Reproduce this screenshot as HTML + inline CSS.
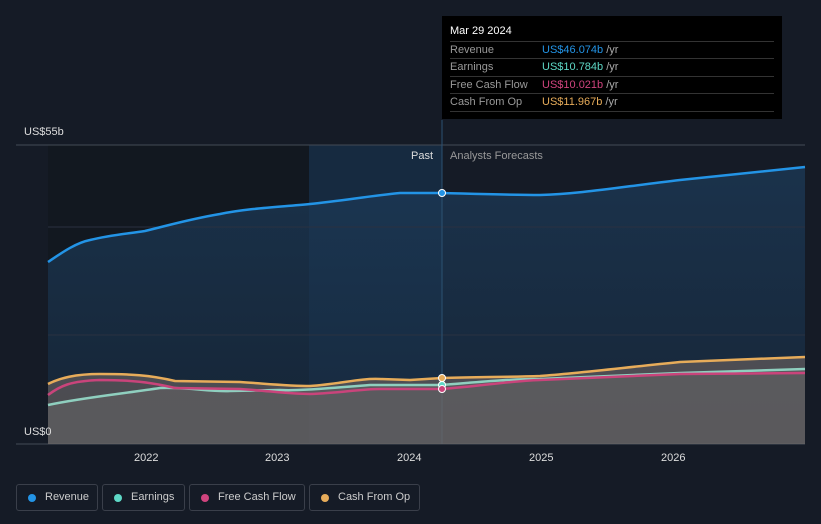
<!DOCTYPE html><html><head><style>
body{margin:0;width:821px;height:524px;background:#151b26;font-family:"Liberation Sans",sans-serif;overflow:hidden;position:relative}
.t{position:absolute;color:#ddd;font-size:11px}
.tip{position:absolute;left:442px;top:16px;width:340px;height:103px;background:#000;}
.tip .h{position:absolute;left:8px;top:9px;color:#fff;font-size:11px}
.row{position:absolute;left:8px;width:324px;border-top:1px solid #333;height:17px;font-size:11px;line-height:17px;color:#999}
.row span{position:absolute;left:92px}
.row i{font-style:normal;color:#aaa}
.lg{position:absolute;top:484px;height:27px;border:1px solid #3a3f4a;border-radius:3px;color:#ccc;font-size:11px;line-height:25px;box-sizing:border-box;padding-left:28px;white-space:nowrap}
.lg b{position:absolute;left:11px;top:9px;width:8px;height:8px;border-radius:50%}
</style></head><body>
<svg width="821" height="524" style="position:absolute;left:0;top:0">
<defs><linearGradient id="g" x1="0" y1="0" x2="0" y2="1"><stop offset="0" stop-color="#1c3a58"/><stop offset="1" stop-color="#17293d"/></linearGradient></defs>
<rect x="48" y="145" width="261" height="299" fill="#121820"/>
<rect x="309" y="145" width="133" height="299" fill="#162a40"/>
<path d="M48,262 C60,254 75,243 90,240 C110,235 125,234 145,231 C170,225 190,219 220,214 C250,208 280,207 310,204 C340,201 370,196 400,193 L442,193 C480,194 510,195 540,195 C580,194 620,187 680,180 L805,167 L805,444 L48,444Z" fill="url(#g)" opacity="0.75"/>
<g stroke="#2a3140" stroke-width="1"><line x1="16" y1="145" x2="805" y2="145" stroke="#444b55"/><line x1="48" y1="227" x2="805" y2="227"/><line x1="48" y1="335" x2="805" y2="335"/><line x1="16" y1="444" x2="805" y2="444" stroke="#444b55"/></g>
<line x1="442" y1="120" x2="442" y2="444" stroke="#2c5272"/>
<path d="M48,384 C60,378 75,374 100,374 C130,374 150,375 175,381 L240,382 C270,384 290,386 310,386 C340,384 360,378 380,379 L410,380 L442,378 C480,377 510,377 540,376 C580,373 620,368 680,362 L805,357 L805,444 L48,444Z" fill="#7a6b66" opacity="0.55"/>
<path d="M48,405 C80,398 120,394 160,388 C190,387 210,392 230,391 L280,390 C300,391 330,388 370,385 L442,385 C480,382 510,379 540,379 L680,373 L805,369 L805,444 L48,444Z" fill="#6a6a6a" opacity="0.45"/>
<path d="M48,262 C60,254 75,243 90,240 C110,235 125,234 145,231 C170,225 190,219 220,214 C250,208 280,207 310,204 C340,201 370,196 400,193 L442,193 C480,194 510,195 540,195 C580,194 620,187 680,180 L805,167" fill="none" stroke="#2394e6" stroke-width="2.5"/>
<path d="M48,405 C80,398 120,394 160,388 C190,387 210,392 230,391 L280,390 C300,391 330,388 370,385 L442,385 C480,382 510,379 540,379 L680,373 L805,369" fill="none" stroke="#8fcfbf" stroke-width="2.5"/>
<path d="M48,395 C60,386 70,381 100,380 C130,380 150,382 175,388 L240,389 C270,391 290,394 310,394 C340,393 360,389 380,389 L442,389 C480,386 510,381 540,380 L680,374 L805,373" fill="none" stroke="#c9447b" stroke-width="2.5"/>
<path d="M48,384 C60,378 75,374 100,374 C130,374 150,375 175,381 L240,382 C270,384 290,386 310,386 C340,384 360,378 380,379 L410,380 L442,378 C480,377 510,377 540,376 C580,373 620,368 680,362 L805,357" fill="none" stroke="#e7ac5a" stroke-width="2.5"/>
<circle cx="442" cy="193" r="3.5" fill="#2394e6" stroke="#fff"/>
<circle cx="442" cy="385" r="3.5" fill="#5ed8c6" stroke="#fff"/>
<circle cx="442" cy="389" r="3.5" fill="#c9447b" stroke="#fff"/>
<circle cx="442" cy="378" r="3.5" fill="#e7ac5a" stroke="#fff"/>
</svg>
<div class="t" style="left:24px;top:126px">US$55b</div>
<div class="t" style="left:24px;top:426px">US$0</div>
<div class="t" style="left:411px;top:150px">Past</div>
<div class="t" style="left:450px;top:150px;color:#999">Analysts Forecasts</div>
<div class="t" style="left:134px;top:452px">2022</div>
<div class="t" style="left:265px;top:452px">2023</div>
<div class="t" style="left:397px;top:452px">2024</div>
<div class="t" style="left:529px;top:452px">2025</div>
<div class="t" style="left:661px;top:452px">2026</div>
<div class="tip"><div class="h">Mar 29 2024</div>
<div class="row" style="top:25px">Revenue<span style="color:#2394e6">US$46.074b <i>/yr</i></span></div>
<div class="row" style="top:42px">Earnings<span style="color:#5ed8c6">US$10.784b <i>/yr</i></span></div>
<div class="row" style="top:60px">Free Cash Flow<span style="color:#d0447e">US$10.021b <i>/yr</i></span></div>
<div class="row" style="top:77px;border-bottom:1px solid #333">Cash From Op<span style="color:#e7ac5a">US$11.967b <i>/yr</i></span></div>
</div>
<div class="lg" style="left:16px;width:82px"><b style="background:#2394e6"></b>Revenue</div>
<div class="lg" style="left:102px;width:83px"><b style="background:#5ed8c6"></b>Earnings</div>
<div class="lg" style="left:189px;width:116px"><b style="background:#d0447e"></b>Free Cash Flow</div>
<div class="lg" style="left:309px;width:111px"><b style="background:#e7ac5a"></b>Cash From Op</div>
</body></html>
